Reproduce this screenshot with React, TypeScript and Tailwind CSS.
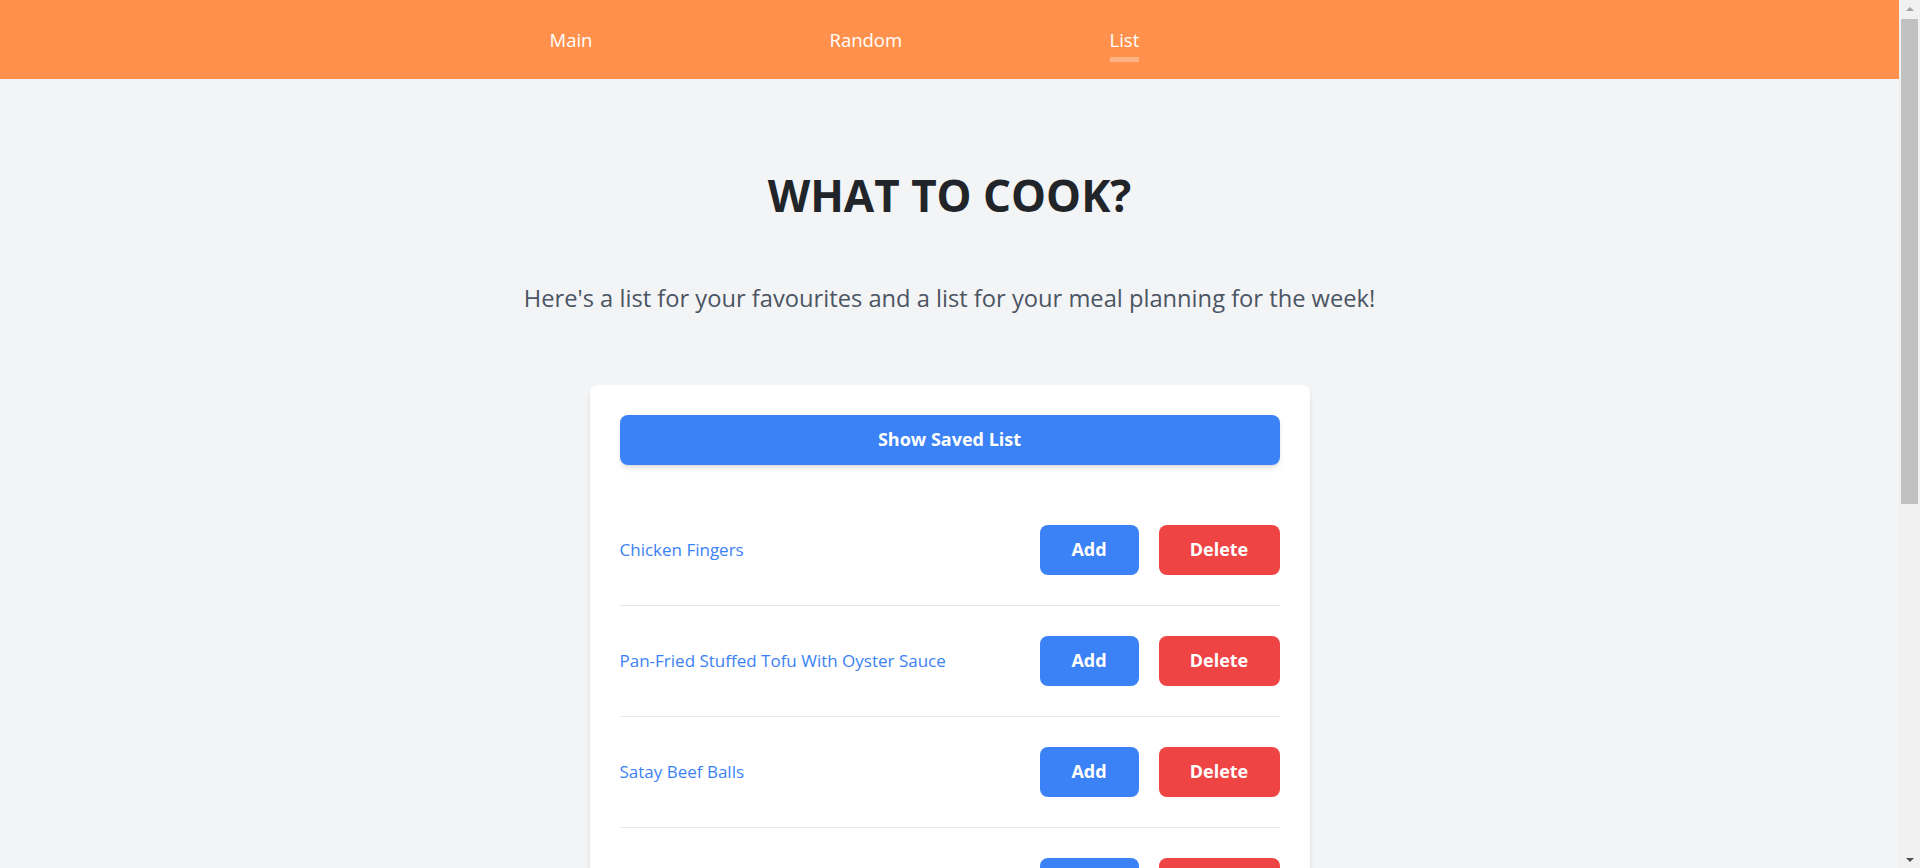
import React from "react";

const items = [
  "Chicken Fingers",
  "Pan-Fried Stuffed Tofu With Oyster Sauce",
  "Satay Beef Balls",
  "Honey Garlic Chicken Wings",
  "Beef And Broccoli Stir Fry",
  "Mapo Tofu",
  "Steamed Fish With Ginger",
  "Egg Fried Rice",
];

function ScrollBar() {
  return (
    <div className="w-[21px] shrink-0 h-full bg-[#f1f1f1] flex flex-col items-center">
      <div className="h-[17px] w-full flex items-center justify-center">
        <div className="w-0 h-0 border-x-4 border-x-transparent border-b-4 border-b-[#a3a3a3]" />
      </div>
      <div className="mt-[2px] w-[17px] h-[485px] bg-[#c1c1c1]" />
      <div className="flex-1" />
      <div className="h-[17px] w-full flex items-center justify-center">
        <div className="w-0 h-0 border-x-4 border-x-transparent border-t-4 border-t-[#505050]" />
      </div>
    </div>
  );
}

export default function App() {
  return (
    <div className="h-screen flex overflow-hidden bg-[#f3f4f6] font-['Open_Sans','Noto_Sans',sans-serif]">
      <div className="flex-1 min-w-0 overflow-hidden">
        <div className="pb-[84px]">
          <header className="h-[79px] bg-[#ff914d] flex justify-center items-center">
            <ul className="flex pl-10">
              {["Main", "Random", "List"].map((n) => (
                <li key={n} className="w-[280px]">
                  <a className="relative inline-block text-[18.5px] leading-[28px] text-white">
                    {n}
                    {n === "List" && (
                      <span className="absolute left-0 right-0 -bottom-[8px] h-[5px] bg-white/30" />
                    )}
                  </a>
                </li>
              ))}
            </ul>
          </header>

          <main className="flex flex-col items-center">
            <h1 className="mt-[88px] text-[44px] leading-[57.6px] font-bold text-[#212529]">
              WHAT TO COOK?
            </h1>
            <p className="mt-[57px] text-[23.7px] leading-[32px] text-[#4b5563]">
              Here's a list for your favourites and a list for your meal planning for the week!
            </p>

            <div className="mt-[71px] w-[720px] bg-white rounded-lg shadow-md p-[30px]">
              <button className="w-full h-[50px] rounded-lg bg-[#3b82f6] text-white text-[18px] font-bold shadow-md">
                Show Saved List
              </button>
              <div className="mt-[30px] flex flex-col">
                {items.map((it) => (
                  <div
                    key={it}
                    className="flex items-center justify-between py-[30px] border-b border-[#e5e7eb]"
                  >
                    <span className="text-[17px] text-[#3b82f6]">{it}</span>
                    <div className="flex gap-[20px]">
                      <button className="w-[99px] h-[50px] rounded-lg bg-[#3b82f6] text-white text-[18px] font-bold">
                        Add
                      </button>
                      <button className="w-[121px] h-[50px] rounded-lg bg-[#ef4444] text-white text-[18px] font-bold">
                        Delete
                      </button>
                    </div>
                  </div>
                ))}
              </div>
            </div>
          </main>
        </div>
      </div>
      <ScrollBar />
    </div>
  );
}
